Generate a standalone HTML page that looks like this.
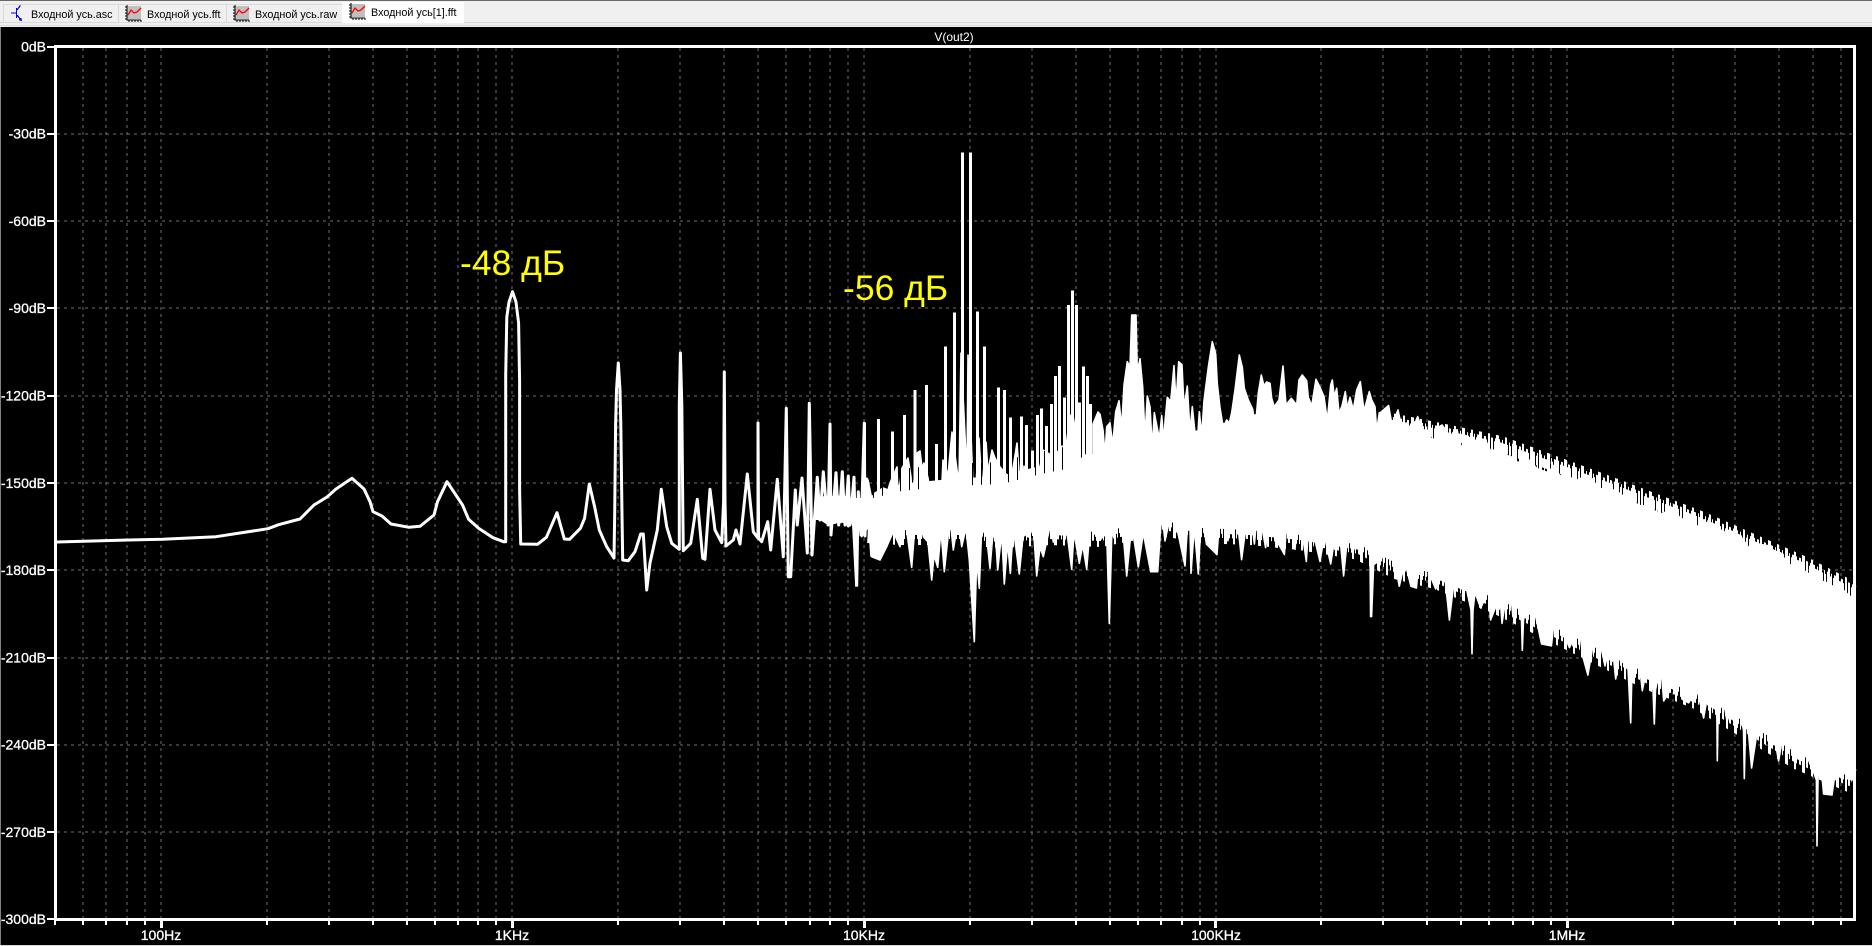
<!DOCTYPE html>
<html><head><meta charset="utf-8"><title>V(out2)</title>
<style>
html,body{margin:0;padding:0;background:#000;width:1872px;height:946px;overflow:hidden}
svg{display:block}
text{font-family:"Liberation Sans","DejaVu Sans",sans-serif}
.ax{fill:#fff;font-size:14px;stroke:#fff;stroke-width:.3px}
.tab{fill:#000;font-size:10.8px}
.yl{fill:#ff0;font-size:35.5px}
</style></head><body>
<svg width="1872" height="946" viewBox="0 0 1872 946" xmlns="http://www.w3.org/2000/svg">
<defs>
<pattern id="p1" width="3" height="10" patternUnits="userSpaceOnUse"><rect width="2" height="10" fill="#fff" shape-rendering="crispEdges"/></pattern>
<pattern id="p2" width="7" height="10" patternUnits="userSpaceOnUse"><rect width="2" height="10" fill="#fff" shape-rendering="crispEdges"/><rect x="4" width="1" height="10" fill="#fff" shape-rendering="crispEdges"/></pattern>
<pattern id="p3" width="17" height="10" patternUnits="userSpaceOnUse"><rect width="3" height="10" fill="#fff" shape-rendering="crispEdges"/><rect x="9" width="2" height="10" fill="#fff" shape-rendering="crispEdges"/></pattern>
<pattern id="k2" width="9" height="10" patternUnits="userSpaceOnUse"><rect width="1" height="10" fill="#000" shape-rendering="crispEdges"/></pattern>
</defs>
<rect width="1872" height="946" fill="#000"/>
<!-- top bar -->
<rect x="0" y="0" width="1872" height="27" fill="#f0f0f0"/>
<rect x="0" y="0" width="1872" height="1" fill="#696969"/>
<rect x="0" y="22" width="1872" height="1" fill="#d4d4d4"/>
<rect x="0" y="25" width="1872" height="1" fill="#dcdcdc"/>
<rect x="0" y="27" width="1" height="919" fill="#808080"/>
<rect x="0" y="945" width="1872" height="1" fill="#d8d8d8"/>
<!-- tabs -->
<rect x="3.5" y="4.5" width="115" height="18" fill="#f0f0f0" stroke="#d9d9d9"/>
<rect x="118.5" y="4.5" width="108" height="18" fill="#f0f0f0" stroke="#d9d9d9"/>
<rect x="226.5" y="4.5" width="116" height="18" fill="#f0f0f0" stroke="#d9d9d9"/>
<rect x="342" y="2" width="122" height="21" fill="#fff"/>
<g fill="none" stroke="#0000ff" stroke-width="1.2" shape-rendering="crispEdges">
<path d="M11 13H16M16.5 8V18M17 10L20 6V5M17 15L21 20"/><path d="M19 20H22M21 18V21"/>
</g>
<g>
<rect x="127" y="6" width="14" height="13" fill="#c0c0c0"/>
<path d="M127 5V20H141" fill="none" stroke="#000" stroke-width="1"/>
<path d="M125 7H127M125 10H127M125 13H127M125 16H127M125 19H127M129 20V22M132 20V22M135 20V22M138 20V22M141 20V22" stroke="#000" stroke-width="1"/>
<path d="M128 15L131 10L134 13L137 12L141 8" fill="none" stroke="#ff0000" stroke-width="1.3"/>
</g>
<g transform="translate(108,0)">
<rect x="127" y="6" width="14" height="13" fill="#c0c0c0"/>
<path d="M127 5V20H141" fill="none" stroke="#000" stroke-width="1"/>
<path d="M125 7H127M125 10H127M125 13H127M125 16H127M125 19H127M129 20V22M132 20V22M135 20V22M138 20V22M141 20V22" stroke="#000" stroke-width="1"/>
<path d="M128 15L131 10L134 13L137 12L141 8" fill="none" stroke="#ff0000" stroke-width="1.3"/>
</g>
<g transform="translate(224,-2)">
<rect x="127" y="6" width="14" height="13" fill="#c0c0c0"/>
<path d="M127 5V20H141" fill="none" stroke="#000" stroke-width="1"/>
<path d="M125 7H127M125 10H127M125 13H127M125 16H127M125 19H127M129 20V22M132 20V22M135 20V22M138 20V22M141 20V22" stroke="#000" stroke-width="1"/>
<path d="M128 15L131 10L134 13L137 12L141 8" fill="none" stroke="#ff0000" stroke-width="1.3"/>
</g>
<text class="tab" x="31" y="18">Входной усь.asc</text>
<text class="tab" x="147" y="18">Входной усь.fft</text>
<text class="tab" x="255" y="18">Входной усь.raw</text>
<text class="tab" x="371" y="16">Входной усь[1].fft</text>
<!-- title -->
<text x="954" y="41" text-anchor="middle" fill="#fff" style="font-size:12px">V(out2)</text>
<!-- grid -->
<g fill="none" stroke="#707070" stroke-width="1" stroke-dasharray="3 4" shape-rendering="crispEdges">
<path d="M57 134H1853M57 221H1853M57 308H1853M57 396H1853M57 483H1853M57 570H1853M57 658H1853M57 745H1853M57 832H1853"/>
<path d="M83 48V918M106 48V918M127 48V918M145 48V918M161 48V918M267 48V918M329 48V918M373 48V918M407 48V918M435 48V918M458 48V918M478 48V918M496 48V918M512 48V918M618 48V918M680 48V918M724 48V918M758 48V918M786 48V918M810 48V918M830 48V918M848 48V918M864 48V918M970 48V918M1032 48V918M1076 48V918M1110 48V918M1138 48V918M1161 48V918M1182 48V918M1200 48V918M1216 48V918M1321 48V918M1383 48V918M1427 48V918M1461 48V918M1489 48V918M1513 48V918M1533 48V918M1551 48V918M1567 48V918M1673 48V918M1735 48V918M1779 48V918M1813 48V918M1841 48V918"/>
</g>
<!-- trace: low frequency line -->
<polyline fill="none" stroke="#fff" stroke-width="3" stroke-linejoin="round" points="57,542 128.6,540 162.5,539.3 216,536.7 268,528.7 278.6,524.7 300,519 314,505 327,497 336,489 352,478.3 364,489 370,501.7 373,511.7 382,516 391,524 409,527.3 420,526.3 434,515 437.5,501.7 447,481.7 462.5,505 468.6,519.3 478.6,528.3 493,537.7 503.6,541.7 505.7,541.7 505.7,486 505.7,375 506.8,317 509,302 512.5,291.7 516,302 518.6,323 519.6,381.7 519.6,490 520.7,544 537.5,544.3 546.4,537.3 557,512.7 564.3,539 569.6,539.3 580.4,528.3 584.6,518.3 589.3,484 594.6,506.7 599.3,530 606.7,546.7 614,558 614.7,513 615.6,425 616.5,390 618.3,363 620,390 620.8,425 622,515 622.7,560 628.3,560.7 635,551.7 640.7,534 643.3,534 646.7,590 650,563 657.3,530 661.3,489.3 666.7,526.7 671.7,543.3 679.3,549.3 679.3,500 679.3,405 680.4,353 681.8,405 682.7,500 683.3,550.7 690.7,543.3 697.3,499.3 702.7,558.3 705,559.3 710,489.3 715,530 721.7,542.7 723.6,501.7 724.3,372 725,501 726,546 733.3,540 736,530 740,544 747.3,474 753.3,531.7 758,538.3 758,423 758.6,538 761.7,541.7 767.7,521.7 770.7,550 777.3,479.3 783.3,556.7 786.3,408.3 788.3,576.7 790.7,576.7 795.3,490 797.3,525 802,478 807.3,553 809.3,403.3 812,555 817.3,477.3 820,520 823.3,471.7 828,525 830,424 831,535 836,472.7 838.7,525 842.3,471.7 845,525 848.3,476 850,525 854,477.3 856.7,585 858.3,491.7 861,535 864.3,423.3 865,536 866.7,479 871.7,556.7"/>
<polyline fill="none" stroke="#fff" stroke-width="3" stroke-linejoin="round" points="840,523 843,515 848.3,526 853,515 856.7,586.7"/>
<!-- dense fill between low-frequency lines -->
<polygon fill="#fff" points="815,500 824,496 836,496 843,495 849,497 855,498 862,498 870,497 874,520 868,526 860,524 852,524 846,524 840,522 835,524 826,524 820,520 815,520"/>
<!-- spectrum body: upper half -->
<polygon fill="#fff" stroke="#fff" stroke-width="1.6" stroke-linejoin="round" points="868,480 872,500 875,493 880,490 883,488 888,490 890,483 897,467 898,500 902,468 908,458 911,477 912,500 917,453 920,451 922,468 924,463 928,478 931,498 938,497 942,483 943,460 948,475 952,432 957,470 959,482 961,353 967,477 968,355 973,487 975,500 979,438 982,490 986,442 988,472 992,450 995,458 1000,467 1007,475 1008,485 1013,468 1017,443 1019,472 1023,485 1024,466 1029,488 1031,470 1040,467 1043,450 1051,455 1053,468 1057,453 1062,446 1065,455 1070,415 1074,428 1078,403 1081,478 1083,455 1092,455 1093,460 1093,424 1098,412 1100,414.3 1103,430 1105,455 1106.7,426.7 1110,422.7 1112.7,445 1115.7,411.7 1119,400.7 1121.7,428 1124,385 1127.3,361.7 1130,367 1131.7,315 1136,315 1137.3,373 1140,358.7 1142.7,387 1145,437 1147.3,396 1150,407 1152.3,448 1154.3,412.7 1156.7,425 1159.3,438.7 1161.7,415.7 1164,441.7 1165,421.7 1167.3,397.3 1170.7,401.7 1174,365.7 1176,403.3 1178.7,361.7 1182,365 1184,408 1187.3,386 1190,431.7 1192.3,406.7 1195,433 1197.7,436.7 1199.3,411.7 1201.7,435 1204,400.7 1208.3,367.3 1212.3,341.7 1215.7,354 1217.3,384 1220,407.7 1223.3,427.7 1226.7,420 1229.3,423 1231.7,412.7 1235,390 1239.3,355 1242.3,367.3 1244.3,388.3 1248.3,400 1252.7,409.3 1255.3,428.3 1258.3,393.3 1261.3,375 1264,386 1266.7,382 1270,383.3 1271.7,398.3 1274.3,406.7 1279,400 1283,366 1286,405 1291.3,398.3 1296.7,405 1299,380 1302.3,375 1306.7,380.7 1308.3,397.3 1311.7,406 1316,379.3 1320,387.3 1324,396.7 1327.3,420.7 1330.7,385 1332.3,380 1334.3,396.7 1336.7,388.3 1339,413.3 1342,406 1345.3,391.7 1347.3,408.3 1350,397.3 1353.3,410 1356.7,390 1360.3,381.7 1364,411 1369.3,391.7 1371.7,400 1375,406.7 1376.7,430.7 1379.3,412.7 1380,413 1388.6,405.5 1392,425 1398,410 1403.6,437 1406.6,423 1412,430 1417.7,416.6 1422,430 1427,430 1433.6,444 1437,428 1442,425 1450,436 1457,429.7 1461.4,449 1465.7,435.5 1474,440.7 1485,439 1491.4,452.8 1497.9,445.9 1505,455 1515,458 1519,471.7 1522.3,453.8 1532,463 1540,472 1547,475 1553.6,465.5 1560,476 1568.6,475 1575,483 1579,478.6 1592,478.6 1598.6,489 1608,488 1618,492 1628,500 1641,506 1650,505.5 1658.6,516.6 1667,511 1675.7,512 1680,518 1690,522 1699,527 1702,519 1710,526 1716,527 1724,532 1731,531 1740,535.5 1748.6,547.6 1758,544 1770,546 1775,553 1780.7,552.8 1788,565 1793.6,564.8 1800,571 1806.4,571.7 1815,580 1825,582 1834,587 1843,590 1851.4,597.6 1853,590 1853,700 1780,680 1700,630 1600,590 1500,550 1400,500 1300,470 1200,465 1100,480 1000,505 868,505"/>
<!-- spectrum body: lower half -->
<polygon fill="#fff" stroke="#fff" stroke-width="1.6" stroke-linejoin="round" points="856.7,505 861.7,536.7 868.3,526.7 871.7,556.7 880,560 886.7,546.7 893.3,531.7 900,546.7 905,518 911.7,567.3 915,525 920,510 923.3,536.7 928,542 931.7,580 934,555 937.7,567.3 941,530 944.3,571.7 950,518.3 953.3,550 958.3,520 961.7,546.7 966,528 969.3,560 974.3,641.7 976.7,558 979.3,588.3 981.7,528 986.7,537 990,568.3 994.3,517 997.7,570 1001.7,533 1004.3,584 1007.7,542 1010.3,573.3 1013.3,527.3 1019.3,574 1023.3,533 1028.3,537 1033.3,527 1036.7,576 1040,547 1043.3,556.7 1050.7,523.3 1053.3,542 1065,516.7 1071.7,569.3 1074,532 1079.3,563.3 1082.7,545 1086.7,569.3 1090,528 1100,540 1106.7,533 1109.3,623.3 1111.7,537 1121.7,516 1126.7,576 1131.7,525 1138.3,566.7 1143.3,533 1150.7,571.7 1157.7,571.7 1161.7,511.7 1165,541 1174.3,497.3 1176.7,527 1185,566 1189.3,495 1191,573.3 1194.3,527 1198.3,574 1201.7,508.3 1206.4,544 1217,554.5 1219.3,523.4 1223.6,511.4 1227.9,540.7 1232,515 1236,508 1241.6,559.7 1245,533.8 1249.3,501 1254.4,544 1257.9,504.5 1265.6,547.6 1270.7,506 1272.9,533.8 1284.4,554.5 1287.9,506 1295,549.3 1298.6,506 1306.3,561.4 1309.3,516.6 1320,561.4 1324.3,535.5 1330.7,564 1338,516.6 1343.6,575.9 1350,513 1353.4,550.3 1362.9,516.6 1366.3,547.6 1370,552 1370.6,616.6 1371.6,616.6 1373.6,564.8 1382,558 1384.3,533.8 1390.7,540.7 1399.3,586.2 1404.9,561.4 1410.9,586.2 1416.4,588 1419.9,547 1427,568 1435.7,589 1443.4,563 1449.4,620 1455,573.4 1459.3,587 1463.6,575 1471,610 1472,653.8 1473,610 1475,592.4 1480.7,608 1488.4,590.7 1490.6,620 1500,596 1502,623.4 1509.4,575 1512.9,616.6 1519.3,601 1521.5,620 1522.3,650.3 1523.5,620 1530,592.4 1535,613 1541.6,644 1551.4,645.9 1555.7,606 1569.4,647.6 1579.3,627 1582.7,656 1587.9,675 1596.4,625 1605,665.9 1611.4,637 1615.7,679 1619,658 1628,668 1630.7,722.8 1632,670 1638,651 1642.3,690.7 1647.9,663 1653,690 1654.3,724 1655.5,690 1660.7,663 1663.7,701 1669,692.4 1677.9,663 1682,699 1688.6,702.8 1697,689 1703.6,718 1710.9,677 1716.7,700 1717.3,760.7 1718.3,700 1722,689 1727,721.7 1735.7,694 1743.5,730 1744.3,778.6 1745.5,730 1747.7,723.4 1751.6,768 1760.6,709 1766.6,733.8 1770,713 1778.6,761 1785,723.4 1794.9,761 1797,733.8 1812.9,770 1816.4,780 1817,845.9 1818,780 1819.3,745.9 1823.6,794 1832,795 1838.6,749 1847,778.6 1853,780 1853,700 1780,680 1700,630 1600,590 1500,550 1400,500 1300,470 1200,465 1100,480 1000,505 856.7,505"/>
<!-- solid core filling the notches -->
<polygon fill="#fff" points="868,497 900,484 950,479 1000,476 1040,466 1090,456 1150,437 1200,430 1250,415 1300,408 1380,425 1440,440 1500,455 1600,490 1700,527 1800,570 1853,598 1853,778 1800,755 1750,725 1700,695 1650,675 1600,650 1550,625 1500,600 1440,575 1400,565 1360,545 1300,535 1250,530 1200,528 1160,520 1100,532 1050,530 1000,533 960,530 900,530 868,528"/>
<!-- vertical comb teeth on the lower edge -->
<g fill="none">
<polyline stroke="url(#p1)" stroke-width="10" points="868,528 900,530 960,530 1000,533 1050,530 1100,532 1160,520 1200,528 1250,530 1300,535 1360,545 1400,565 1440,575 1500,600 1550,625 1600,650 1650,675 1700,695 1750,725 1800,755 1853,778"/>
<polyline stroke="url(#p2)" stroke-width="18" points="868,528 900,530 960,530 1000,533 1050,530 1100,532 1160,520 1200,528 1250,530 1300,535 1360,545 1400,565 1440,575 1500,600 1550,625 1600,650 1650,675 1700,695 1750,725 1800,755 1853,778"/>
<polyline stroke="url(#p3)" stroke-width="30" points="868,528 900,530 960,530 1000,533 1050,530 1100,532 1160,520 1200,528 1250,530 1300,535 1360,545 1400,565 1440,575 1500,600 1550,625 1600,650 1650,675 1700,695 1750,725 1800,755 1853,778"/>
<!-- vertical comb teeth on the upper edge -->
<polyline stroke="url(#p1)" stroke-width="9" points="1380,422 1440,434 1500,447 1600,484 1700,522 1800,566 1853,593"/>
<polyline stroke="url(#p2)" stroke-width="15" points="1380,422 1440,434 1500,447 1600,484 1700,522 1800,566 1853,593"/>
<polyline stroke="url(#p3)" stroke-width="22" points="1380,422 1440,434 1500,447 1600,484 1700,522 1800,566 1853,593"/>
<!-- black slots on the upper edge of the mid band -->
<polyline stroke="url(#k2)" stroke-width="22" points="868,488 900,480 950,475 1000,473 1040,463 1090,453"/>
</g>
<!-- discrete spikes -->
<path fill="none" stroke="#fff" stroke-width="3" shape-rendering="crispEdges" d="M864.3 423V500M878.3 419V500M892.3 431.7V500M904.3 415V500M915 390V500M926.3 385V500M936.7 444V500M945.3 346.7V500M954.3 312.7V500M962.3 152.7V500M970.3 152.7V500M977.3 311.7V500M984.3 346.7V500M998.3 387.7V500M1004.3 390V500M1010.3 417.7V500M1021.3 416.7V500M1026.3 425V500M1032.3 450.7V500M1037.3 415V500M1041.3 408.7V500M1046.3 426V500M1051.3 404V500M1055.3 376V500M1059.3 366V500M1064.3 397.3V500M1068.3 305V500M1072.3 290.7V500M1076.3 305V500M1079.3 402.7V470M1083.3 366.7V500M1087.3 376V500M1090.3 404V500"/>
<!-- axes -->
<g fill="#fff" shape-rendering="crispEdges">
<rect x="54" y="45" width="1802" height="3"/>
<rect x="54" y="918" width="1802" height="3"/>
<rect x="54" y="45" width="3" height="876"/>
<rect x="1853" y="45" width="3" height="876"/>
<path d="M47 46h7v2h-7zM47 133h7v2h-7zM47 220h7v2h-7zM47 307h7v2h-7zM47 395h7v2h-7zM47 482h7v2h-7zM47 569h7v2h-7zM47 657h7v2h-7zM47 744h7v2h-7zM47 831h7v2h-7zM47 918h7v2h-7z"/>
<path d="M54 921h2v4h-2zM82 921h2v4h-2zM105 921h2v4h-2zM126 921h2v4h-2zM144 921h2v4h-2zM266 921h2v4h-2zM328 921h2v4h-2zM372 921h2v4h-2zM406 921h2v4h-2zM434 921h2v4h-2zM457 921h2v4h-2zM477 921h2v4h-2zM495 921h2v4h-2zM617 921h2v4h-2zM679 921h2v4h-2zM723 921h2v4h-2zM757 921h2v4h-2zM785 921h2v4h-2zM809 921h2v4h-2zM829 921h2v4h-2zM847 921h2v4h-2zM969 921h2v4h-2zM1031 921h2v4h-2zM1075 921h2v4h-2zM1109 921h2v4h-2zM1137 921h2v4h-2zM1160 921h2v4h-2zM1181 921h2v4h-2zM1199 921h2v4h-2zM1320 921h2v4h-2zM1382 921h2v4h-2zM1426 921h2v4h-2zM1460 921h2v4h-2zM1488 921h2v4h-2zM1512 921h2v4h-2zM1532 921h2v4h-2zM1550 921h2v4h-2zM1672 921h2v4h-2zM1734 921h2v4h-2zM1778 921h2v4h-2zM1812 921h2v4h-2zM1840 921h2v4h-2z"/>
<path d="M160 921h3v7h-3zM511 921h3v7h-3zM863 921h3v7h-3zM1214 921h3v7h-3zM1566 921h3v7h-3z"/>
</g>
<!-- y labels -->
<g text-anchor="end">
<text class="ax" x="46" y="51.5">0dB</text>
<text class="ax" x="46" y="138.5">-30dB</text>
<text class="ax" x="46" y="226">-60dB</text>
<text class="ax" x="46" y="313">-90dB</text>
<text class="ax" x="46" y="400.5">-120dB</text>
<text class="ax" x="46" y="488">-150dB</text>
<text class="ax" x="46" y="575">-180dB</text>
<text class="ax" x="46" y="662.5">-210dB</text>
<text class="ax" x="46" y="749.5">-240dB</text>
<text class="ax" x="46" y="837">-270dB</text>
<text class="ax" x="46" y="924">-300dB</text>
</g>
<!-- x labels -->
<g text-anchor="middle">
<text class="ax" x="161" y="940">100Hz</text>
<text class="ax" x="512" y="940">1KHz</text>
<text class="ax" x="864" y="940">10KHz</text>
<text class="ax" x="1216" y="940">100KHz</text>
<text class="ax" x="1567" y="940">1MHz</text>
</g>
<!-- annotations -->
<text class="yl" x="460" y="275">-48 дБ</text>
<text class="yl" x="843" y="300">-56 дБ</text>
</svg>
</body></html>
